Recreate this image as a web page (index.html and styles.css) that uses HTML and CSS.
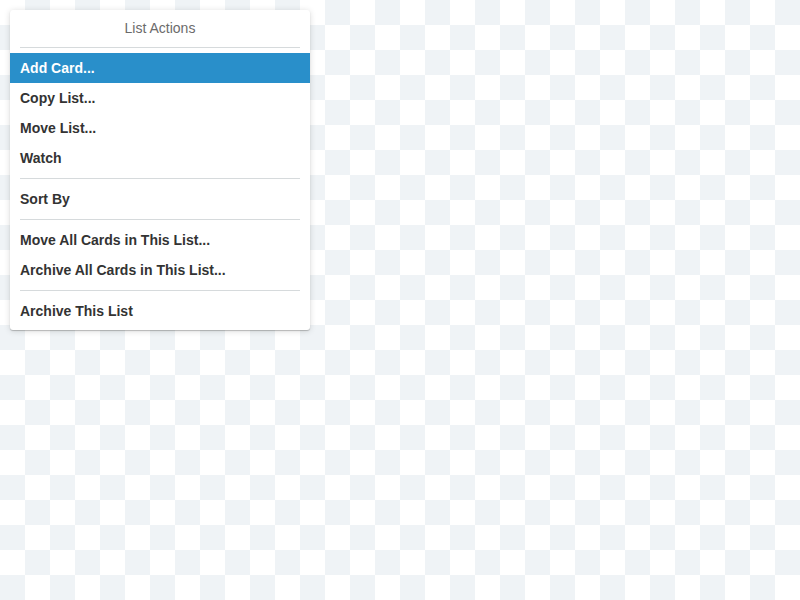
FILE: index.html
```html
<!DOCTYPE html>
<html>
<head>
<meta charset="utf-8">
<link rel="stylesheet" href="styles.css">
</head>
<body>
<div class="pop-over">
  <div class="pop-over-header">List Actions</div>
  <div class="pop-over-content">
    <ul class="menu">
      <li class="menu-item active">Add Card...</li>
      <li class="menu-item">Copy List...</li>
      <li class="menu-item">Move List...</li>
      <li class="menu-item">Watch</li>
    </ul>
    <hr class="sep">
    <ul class="menu">
      <li class="menu-item">Sort By</li>
    </ul>
    <hr class="sep">
    <ul class="menu">
      <li class="menu-item">Move All Cards in This List...</li>
      <li class="menu-item">Archive All Cards in This List...</li>
    </ul>
    <hr class="sep">
    <ul class="menu">
      <li class="menu-item">Archive This List</li>
    </ul>
  </div>
</div>
</body>
</html>
```

FILE: styles.css
```css
html {
  background-color: #fff;
  background-image: conic-gradient(#eff3f6 0deg 90deg, #fff 90deg 180deg, #eff3f6 180deg 270deg, #fff 270deg 360deg);
  background-size: 50px 50px;
  min-height: 100%;
}
body {
  margin: 0;
  padding: 10px;
  font-family: "Liberation Sans", Arial, Helvetica, sans-serif;
  font-size: 14px;
}
.pop-over {
  width: 300px;
  background: #fff;
  border-radius: 3px;
  box-shadow: 0 1px 6px rgba(0, 0, 0, 0.15), 0 1px 1px rgba(0, 0, 0, 0.22);
  overflow: hidden;
}
.pop-over-header {
  height: 37px;
  line-height: 37px;
  margin: 0 10px;
  border-bottom: 1px solid #d6dadc;
  text-align: center;
  color: #6b6b6b;
  font-size: 14px;
}
.pop-over-content {
  padding: 5px 0 4px;
}
.menu {
  list-style: none;
  margin: 0;
  padding: 0;
}
.menu-item {
  height: 30px;
  line-height: 30px;
  padding: 0 10px;
  font-weight: bold;
  color: #333;
}
.menu-item.active {
  background: #298fca;
  color: #fff;
}
.sep {
  border: 0;
  height: 1px;
  background: #d6dadc;
  margin: 5px 10px;
}
```
